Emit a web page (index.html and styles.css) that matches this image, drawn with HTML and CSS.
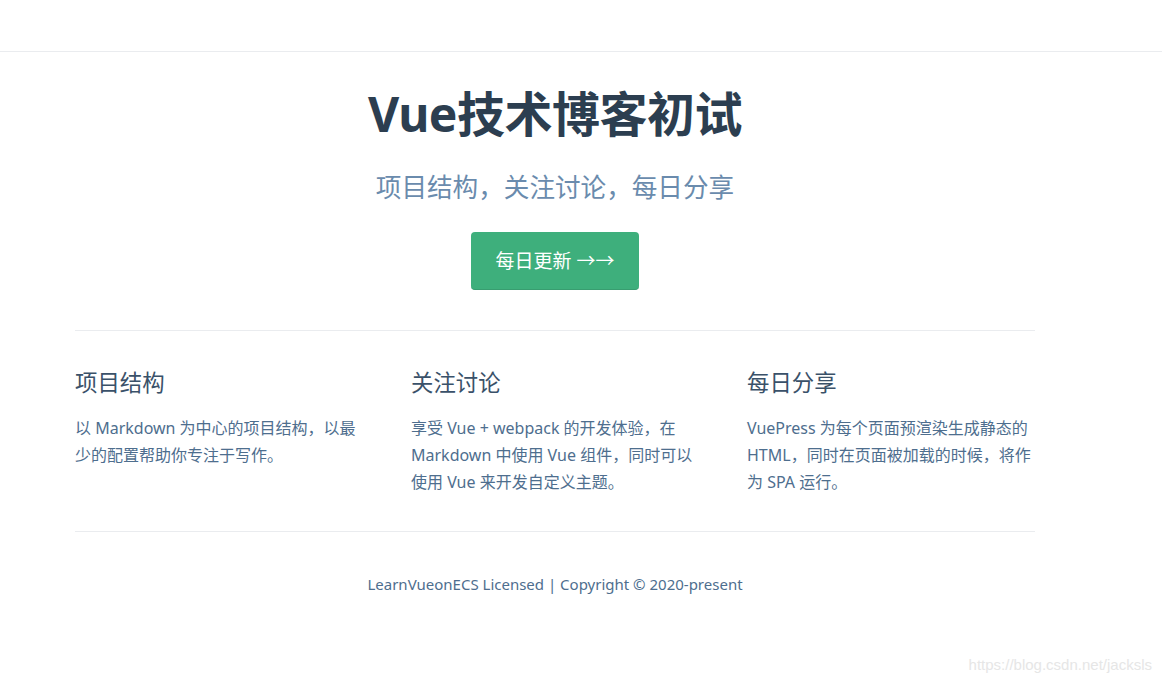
FILE: index.html
```html
<!DOCTYPE html>
<html lang="zh">
<head>
<meta charset="utf-8">
<title>Vue技术博客初试</title>
<link rel="stylesheet" href="styles.css">
</head>
<body>
<header class="navbar"></header>
<main class="home">
  <section class="hero">
    <h1 class="title">Vue技术博客初试</h1>
    <p class="description">项目结构，关注讨论，每日分享</p>
    <a class="action-button" href="#">每日更新 →→</a>
  </section>
  <section class="features">
    <div class="feature">
      <h2>项目结构</h2>
      <p>以 Markdown 为中心的项目结构，以最少的配置帮助你专注于写作。</p>
    </div>
    <div class="feature">
      <h2>关注讨论</h2>
      <p>享受 Vue + webpack 的开发体验，在 Markdown 中使用 Vue 组件，同时可以使用 Vue 来开发自定义主题。</p>
    </div>
    <div class="feature">
      <h2>每日分享</h2>
      <p>VuePress 为每个页面预渲染生成静态的 HTML，同时在页面被加载的时候，将作为 SPA 运行。</p>
    </div>
  </section>
  <footer class="footer">LearnVueonECS Licensed | Copyright © 2020-present</footer>
</main>
<div class="watermark">https://blog.csdn.net/jacksls</div>
</body>
</html>
```

FILE: styles.css
```css
html, body {
  margin: 0;
  padding: 0;
  background: #fff;
}
body {
  font-family: "Noto Sans", "Noto Sans CJK SC", sans-serif;
  color: #2c3e50;
  width: 1162px;
  height: 681px;
  overflow: hidden;
  position: relative;
}
.navbar {
  height: 51px;
  border-bottom: 1px solid #eaecef;
}
.home {
  width: 960px;
  margin-left: 75px;
}
.hero {
  display: flex;
  flex-direction: column;
  align-items: center;
  padding-top: 35px;
}
.title {
  margin: 0;
  font-size: 48px;
  line-height: 53px;
  font-weight: 700;
  color: #2c3e50;
  letter-spacing: -0.5px;
}
.description {
  margin: 31px 0 0;
  font-size: 25.6px;
  line-height: 33px;
  color: #6a8bad;
}
.action-button {
  margin-top: 28px;
  display: inline-block;
  font-size: 19px;
  line-height: 32.6px;
  color: #fff;
  background: #3eaf7c;
  padding: 12.8px 24.5px;
  border-radius: 4px;
  border-bottom: 1px solid #389d70;
  box-sizing: border-box;
  height: 58px;
  text-decoration: none;
}
.features {
  margin-top: 40px;
  border-top: 1px solid #eaecef;
  border-bottom: 1px solid #eaecef;
  display: flex;
  justify-content: space-between;
  align-items: flex-start;
  padding: 38px 0 34px;
}
.feature {
  flex: 0 0 30%;
}
.feature h2 {
  margin: 0;
  font-size: 22.4px;
  line-height: 28px;
  font-weight: 400;
  color: #3a5169;
}
.feature p {
  margin: 18px 0 0;
  font-size: 16px;
  line-height: 27.2px;
  color: #4e6e8e;
}
.footer {
  padding-top: 40px;
  text-align: center;
  font-size: 15px;
  line-height: 24px;
  color: #4e6e8e;
}
.watermark {
  position: absolute;
  right: 10px;
  bottom: 8px;
  font-family: "Liberation Sans", Arial, sans-serif;
  font-size: 15px;
  color: #e6e6e6;
}
```
